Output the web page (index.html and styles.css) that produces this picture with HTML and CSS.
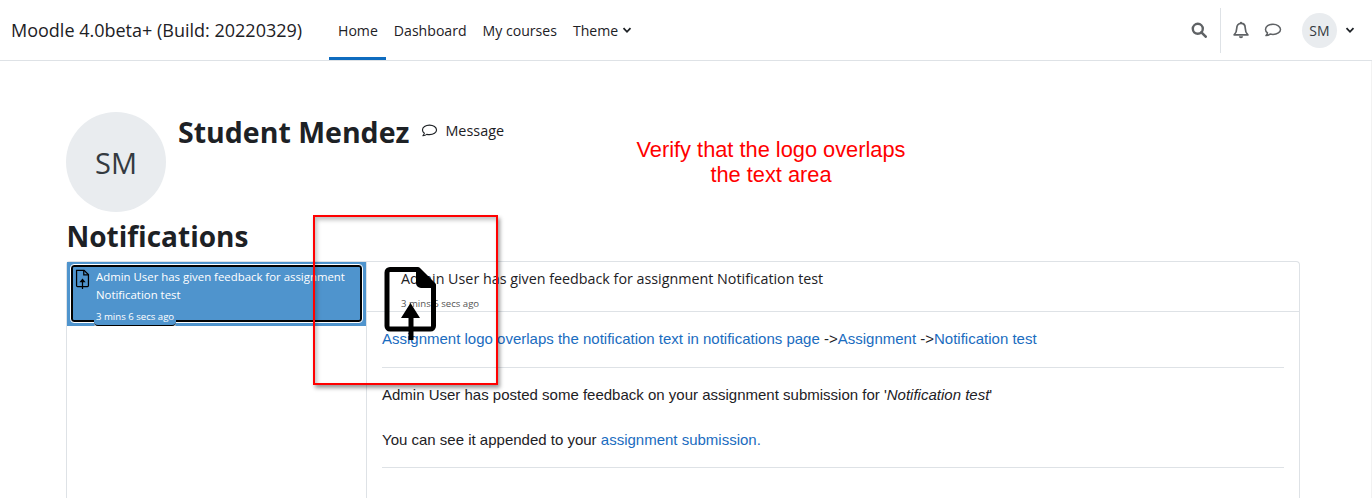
FILE: index.html
```html
<!DOCTYPE html>
<html lang="en">
<head>
<meta charset="utf-8">
<title>Notifications</title>
<link rel="stylesheet" href="styles.css">
</head>
<body>
<nav class="navbar">
  <span class="brand">Moodle 4.0beta+ (Build: 20220329)</span>
  <ul class="nav-links">
    <li class="nav-item active">Home</li>
    <li class="nav-item">Dashboard</li>
    <li class="nav-item">My courses</li>
    <li class="nav-item">Theme
      <svg class="caret" viewBox="0 0 10 10"><path d="M1.500 3.200 5 6.800l3.500-3.600" fill="none" stroke="#1d2125" stroke-width="1.800"/></svg>
    </li>
  </ul>
  <div class="nav-right">
    <svg class="ico-search" viewBox="0 0 16 16"><circle cx="6.800" cy="6.800" r="5" fill="none" stroke="#5f6265" stroke-width="2.400"/><path d="M10.400 10.400 14.700 14.700" stroke="#5f6265" stroke-width="2.600" stroke-linecap="round"/></svg>
    <span class="nav-divider"></span>
    <svg class="ico-bell" viewBox="0 0 16 18"><path d="M8 2.200c-2.600 0-4 2-4 4.400 0 3.400-1 5-2.500 6.600h13C13 11.600 12 10 12 6.600c0-2.400-1.400-4.400-4-4.400Z" fill="none" stroke="#5f6265" stroke-width="1.600" stroke-linejoin="round"/><path d="M6 14.400a2 2 0 0 0 4 0Z" fill="#5f6265"/><circle cx="8" cy="1.600" r="1" fill="#5f6265"/></svg>
    <svg class="ico-chat" viewBox="0 0 18 16"><path d="M9 2.200c-4.200 0-7.500 2.300-7.500 5.200 0 1.400.8 2.600 2 3.500-.2 1-.8 2-1.500 2.700 1.500-.1 3-.7 4.100-1.500.9.200 1.900.3 2.900.3 4.200 0 7.500-2.300 7.500-5S13.200 2.200 9 2.200Z" fill="none" stroke="#5f6265" stroke-width="1.500" stroke-linejoin="round"/></svg>
    <span class="avatar-small">SM</span>
    <svg class="caret caret-user" viewBox="0 0 10 10"><path d="M1.500 3.200 5 6.800l3.500-3.600" fill="none" stroke="#1d2125" stroke-width="1.800"/></svg>
  </div>
</nav>

<main class="page">
  <header class="profile">
    <span class="avatar-large">SM</span>
    <div class="profile-name">
      <h1>Student Mendez</h1>
      <span class="message-link">
        <svg class="ico-msg" viewBox="0 0 18 16"><path d="M9 2.200c-4.200 0-7.500 2.300-7.500 5.200 0 1.400.8 2.600 2 3.500-.2 1-.8 2-1.500 2.700 1.500-.1 3-.7 4.100-1.500.9.200 1.900.3 2.900.3 4.200 0 7.500-2.300 7.500-5S13.200 2.200 9 2.200Z" fill="none" stroke="#1d2125" stroke-width="1.200" stroke-linejoin="round"/></svg>
        Message
      </span>
    </div>
  </header>
  <h2 class="section-title">Notifications</h2>

  <section class="panel">
    <aside class="list">
      <div class="list-row">
        <div class="list-item">
          <svg class="ico-file-small" viewBox="0 0 24 32"><path d="M2.500 2h12l7 7v17.500a1.500 1.500 0 0 1-1.500 1.500H4a1.500 1.500 0 0 1-1.500-1.500Z" fill="none" stroke="#000" stroke-width="2"/><path d="M14 2v7.500h7.500" fill="none" stroke="#000" stroke-width="2"/><path d="M12 32V19" stroke="#000" stroke-width="2"/><path d="M7 21l5-6 5 6Z" fill="#000"/></svg>
          <div class="list-text">
            <div>Admin User has given feedback for assignment Notification test</div>
            <div class="list-time">3 mins 6 secs ago</div>
          </div>
        </div>
      </div>
    </aside>
    <article class="detail">
      <header class="detail-head">
        <div class="detail-title">Admin User has given feedback for assignment Notification test</div>
        <div class="detail-time">3 mins 6 secs ago</div>
      </header>
      <div class="detail-body">
        <p class="crumb"><a href="#">Assignment logo overlaps the notification text in notifications page</a> -&gt;<a href="#">Assignment</a> -&gt;<a href="#">Notification test</a></p>
        <div class="feedback">
          <p>Admin User has posted some feedback on your assignment submission for '<i>Notification test</i>'</p>
          <p>You can see it appended to your <a href="#">assignment submission</a><a href="#">.</a></p>
        </div>
      </div>
    </article>
  </section>
</main>

<svg class="overlap-logo" viewBox="0 0 54 76"><path d="M6 3.500h28l15.500 15.500v41a3 3 0 0 1-3 3H6a3 3 0 0 1-3-3V6.500a3 3 0 0 1 3-3Z" fill="none" stroke="#000" stroke-width="5" stroke-linejoin="round"/><path d="M34 4v13a3 3 0 0 0 3 3h13Z" fill="#000" stroke="#000" stroke-width="4" stroke-linejoin="round"/><path d="M26.500 37 17 52h7.500v22h5V52H36Z" fill="#000"/></svg>
<div class="callout-box"></div>
<div class="callout-text">Verify that the logo overlaps<br>the text area</div>
<div class="edge-line"></div>
</body>
</html>
```
FILE: styles.css
```css
* { box-sizing: border-box; }
html, body { margin: 0; padding: 0; }
html { height: 498px; overflow: hidden; }
body {
  width: 1372px;
  height: 498px;
  overflow: hidden;
  background: #fff;
  color: #1d2125;
  font-family: "Open Sans", "Noto Sans", sans-serif;
  font-size: 14px;
  position: relative;
}
.navbar {
  height: 61px;
  border-bottom: 1px solid #dee2e6;
  display: flex;
  align-items: center;
  padding-left: 11px;
}
.brand { font-size: 18px; width: 318px; white-space: nowrap; }
.nav-links {
  list-style: none;
  margin: 0;
  padding: 0;
  display: flex;
  height: 60px;
  font-size: 14.1px;
}
.nav-item {
  padding: 0 8px;
  display: flex;
  align-items: center;
  gap: 4px;
  white-space: nowrap;
}
.nav-item.active { border-bottom: 3px solid #0f6cbf; padding: 3px 8px 0 9px; }
.caret { width: 10px; height: 10px; }
.nav-right {
  margin-left: auto;
  display: flex;
  align-items: center;
  height: 60px;
  padding-right: 17px;
}
.ico-search { width: 16px; height: 16px; margin: 0 13px 0 0; }
.nav-divider { width: 1px; height: 45px; background: #dee2e6; margin-right: 11px; }
.ico-bell { width: 18px; height: 19px; margin-right: 14px; }
.ico-chat { width: 18px; height: 16px; margin-right: 20px; }
.avatar-small {
  width: 35px;
  height: 35px;
  border-radius: 50%;
  background: #e9ecef;
  color: #343a40;
  display: flex;
  align-items: center;
  justify-content: center;
  margin-right: 8px;
}
.page { padding: 51px 72px 0 66px; }
.profile { display: flex; height: 100px; }
.avatar-large {
  width: 100px;
  height: 100px;
  border-radius: 50%;
  background: #e9ecef;
  color: #343a40;
  display: flex;
  align-items: center;
  justify-content: center;
  font-size: 29px;
  flex: none;
}
.profile-name { display: flex; align-items: center; height: 40px; margin-left: 12px; }
h1 { font-size: 28.500px; font-weight: 700; margin: 0; line-height: 40px; white-space: nowrap; }
.message-link { display: flex; align-items: center; margin: -3px 0 0 12px; gap: 7px; font-size: 14.400px; }
.ico-msg { width: 17px; height: 15px; }
.section-title { font-size: 28px; font-weight: 700; margin: 4px 0 5px 0.500px; line-height: 40px; }
.panel {
  display: flex;
  width: 1234px;
  height: 237px;
  border: 1px solid #dee2e6;
  border-bottom: 0;
  border-radius: 4px 4px 0 0;
}
.list { width: 300px; border-right: 1px solid #dee2e6; flex: none; }
.list-row { background: #4f94cd; height: 64px; padding: 3px 4px 4px 4px; }
.list-item {
  height: 57px;
  border: 2px solid #000;
  outline: 1px solid #fff;
  border-radius: 3px;
  display: flex;
  color: #fff;
  font-size: 11.400px;
  line-height: 18px;
}
.ico-file-small { width: 15px; height: 20px; margin: 2px 0 0 2px; flex: none; }
.list-text { margin: 1px 0 0 6px; }
.list-time {
  display: inline-block;
  font-size: 9.600px;
  line-height: 14px;
  margin: 6px 0 0 -2px;
  padding: 0 2px;
  height: 16px;
  position: relative;
  background: #4f94cd;
  border-bottom: 1px solid #000;
  border-radius: 0 0 4px 4px;
  box-shadow: 0 1px 0 #fff;
}
.detail { flex: 1; min-width: 0; }
.detail-head { height: 50px; border-bottom: 1px solid #dee2e6; padding: 7px 15px 0 34px; }
.detail-title { font-size: 14.300px; line-height: 20px; }
.detail-time { font-size: 9.600px; line-height: 14px; color: #555; margin-top: 8px; }
.detail-body { padding: 0 15px; font-family: "Liberation Sans", Arial, sans-serif; font-size: 15px; }
.crumb { margin: 0; height: 56px; padding-top: 18px; line-height: 17px; border-bottom: 1px solid #dee2e6; }
.feedback { height: 100px; padding-top: 18px; border-bottom: 1px solid #dee2e6; }
.feedback p { margin: 0 0 28px; line-height: 17px; }
a { color: #1a6cc0; text-decoration: none; }
.overlap-logo { position: absolute; left: 384px; top: 266px; width: 54px; height: 76px; }
.callout-box {
  position: absolute;
  left: 313px;
  top: 215px;
  width: 185px;
  height: 170px;
  border: 2px solid #f00;
  box-shadow: 2px 3px 4px rgba(0,0,0,.4), inset 2px 3px 4px rgba(0,0,0,.25);
}
.callout-text {
  position: absolute;
  left: 600px;
  top: 137px;
  width: 342px;
  text-align: center;
  color: #f00;
  font-family: "Liberation Sans", Arial, sans-serif;
  font-size: 21.800px;
  line-height: 25px;
}
.edge-line { position: absolute; right: 0; top: 61px; bottom: 0; width: 1px; background: #f2f2f2; }
```
